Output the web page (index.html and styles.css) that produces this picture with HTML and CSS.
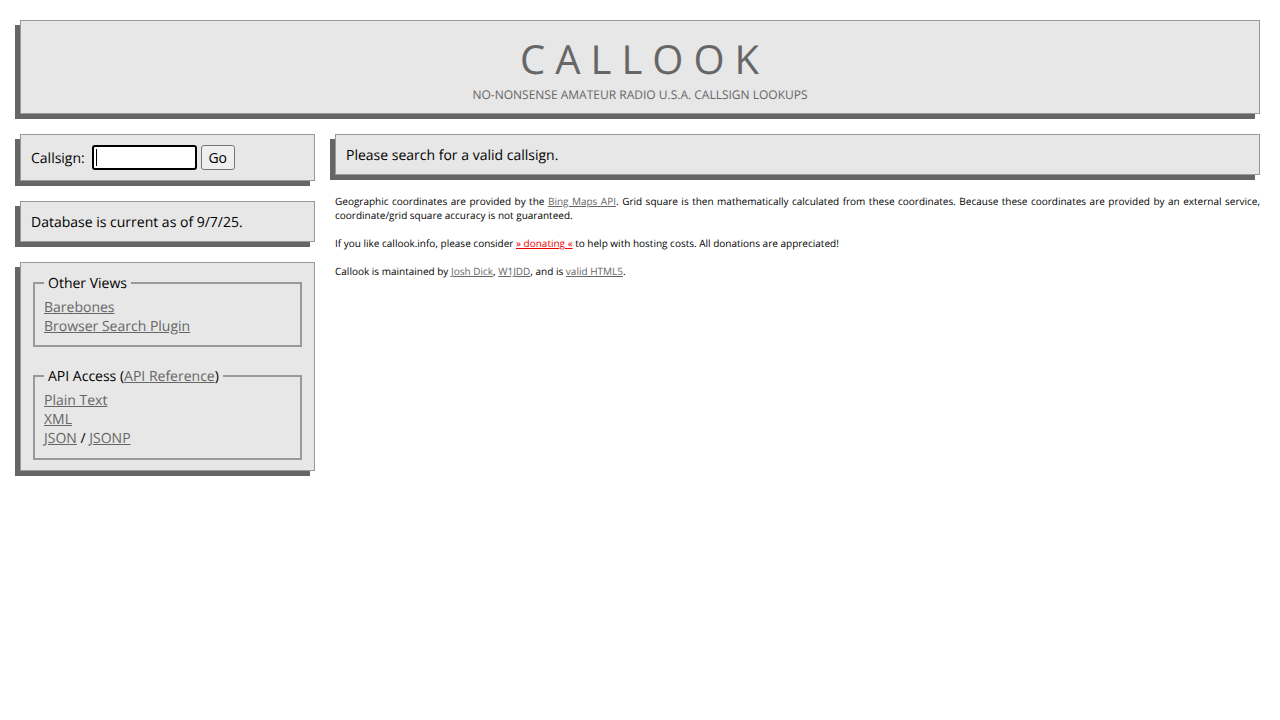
FILE: index.html
```html
<!DOCTYPE html>
<html lang="en">
<head>
<meta charset="utf-8">
<title>Callook</title>
<link rel="stylesheet" href="styles.css">
</head>
<body>
<header class="box header">
  <h1 class="title">CALLOOK</h1>
  <p class="subtitle">No-nonsense amateur radio U.S.A. callsign lookups</p>
</header>
<div class="layout">
  <aside class="sidebar">
    <form class="box search" onsubmit="return false">
      <label class="search-label" for="callsign">Callsign:</label>
      <span class="field-wrap">
        <input id="callsign" class="field" type="text">
        <span class="caret"></span>
      </span>
      <button class="go" type="submit">Go</button>
    </form>
    <div class="box">Database is current as of 9/7/25.</div>
    <div class="box views">
      <fieldset class="group">
        <legend>Other Views</legend>
        <a href="#">Barebones</a><br>
        <a href="#">Browser Search Plugin</a>
      </fieldset>
      <fieldset class="group">
        <legend>API Access (<a href="#">API Reference</a>)</legend>
        <a href="#">Plain Text</a><br>
        <a href="#">XML</a><br>
        <a href="#">JSON</a> / <a href="#">JSONP</a>
      </fieldset>
    </div>
  </aside>
  <main class="content">
    <div class="box">Please search for a valid callsign.</div>
    <div class="notes">
      <p class="just">Geographic coordinates are provided by the <a href="#">Bing Maps API</a>. Grid square is then mathematically calculated from these coordinates. Because these coordinates are provided by an external service, coordinate/grid square accuracy is not guaranteed.</p>
      <p>If you like callook.info, please consider <a class="donate" href="#">» donating «</a> to help with hosting costs. All donations are appreciated!</p>
      <p>Callook is maintained by <a href="#">Josh Dick</a>, <a href="#">W1JDD</a>, and is <a href="#">valid HTML5</a>.</p>
    </div>
  </main>
</div>
</body>
</html>
```
FILE: styles.css
```css
* { box-sizing: border-box; }
html { background: #fff; }
body {
  margin: 0;
  padding: 20px;
  font-family: "Open Sans", sans-serif;
  font-size: 14px;
  line-height: 19px;
  color: #000;
  text-rendering: geometricPrecision;
}
a { color: #666; }
.box {
  background: #e7e7e7;
  border: 1px solid #999;
  box-shadow: -5px 5px 0 #666;
  padding: 11px 10px 9px;
}
.header {
  height: 94px;
  text-align: center;
  color: #666;
  padding: 0;
}
.title {
  margin: 0;
  padding: 13px 0 0 9px;
  font-size: 40px;
  line-height: 50px;
  font-weight: 400;
  letter-spacing: 10px;
}
.subtitle {
  margin: 0;
  font-size: 12px;
  line-height: 18px;
  text-transform: uppercase;
  padding-top: 2px;
}
.layout {
  display: flex;
  gap: 20px;
  margin-top: 20px;
  align-items: flex-start;
}
.sidebar {
  width: 295px;
  flex: none;
  display: flex;
  flex-direction: column;
  gap: 20px;
}
.search {
  height: 47px;
  display: flex;
  align-items: center;
  padding-top: 9px;
  padding-bottom: 9px;
}
.search-label { padding-top: 2px; }
.field-wrap {
  position: relative;
  display: block;
  margin-left: 7px;
  height: 25px;
}
.field {
  display: block;
  width: 105px;
  height: 25px;
  border: 2px solid #000;
  border-radius: 3px;
  padding: 1px 2px;
  background: #fff;
  outline: none;
  font: 14px "Open Sans", sans-serif;
}
.caret {
  position: absolute;
  left: 4px;
  top: 4px;
  width: 1px;
  height: 17px;
  background: #000;
}
.go {
  width: 34px;
  height: 25px;
  margin-left: 4px;
  padding: 0;
  border: 1px solid #767676;
  border-radius: 3px;
  background: #efefef;
  font: 14px "Open Sans", sans-serif;
  color: #000;
}
.views { padding: 9px 12px 10px; }
.group {
  margin: 0;
  padding: 5px 9px 9px;
  border: 2px solid #999;
  min-width: 0;
}
.group + .group {
  margin-top: 18px;
  padding-bottom: 10px;
}
.group legend { padding: 2px 4px 0; }
.content { flex: 1; min-width: 0; }
.notes {
  margin-top: 19px;
  font-size: 10px;
  line-height: 14px;
}
.notes p { margin: 0 0 14px; }
.just { text-align: justify; }
.donate { color: #e00; }
```
